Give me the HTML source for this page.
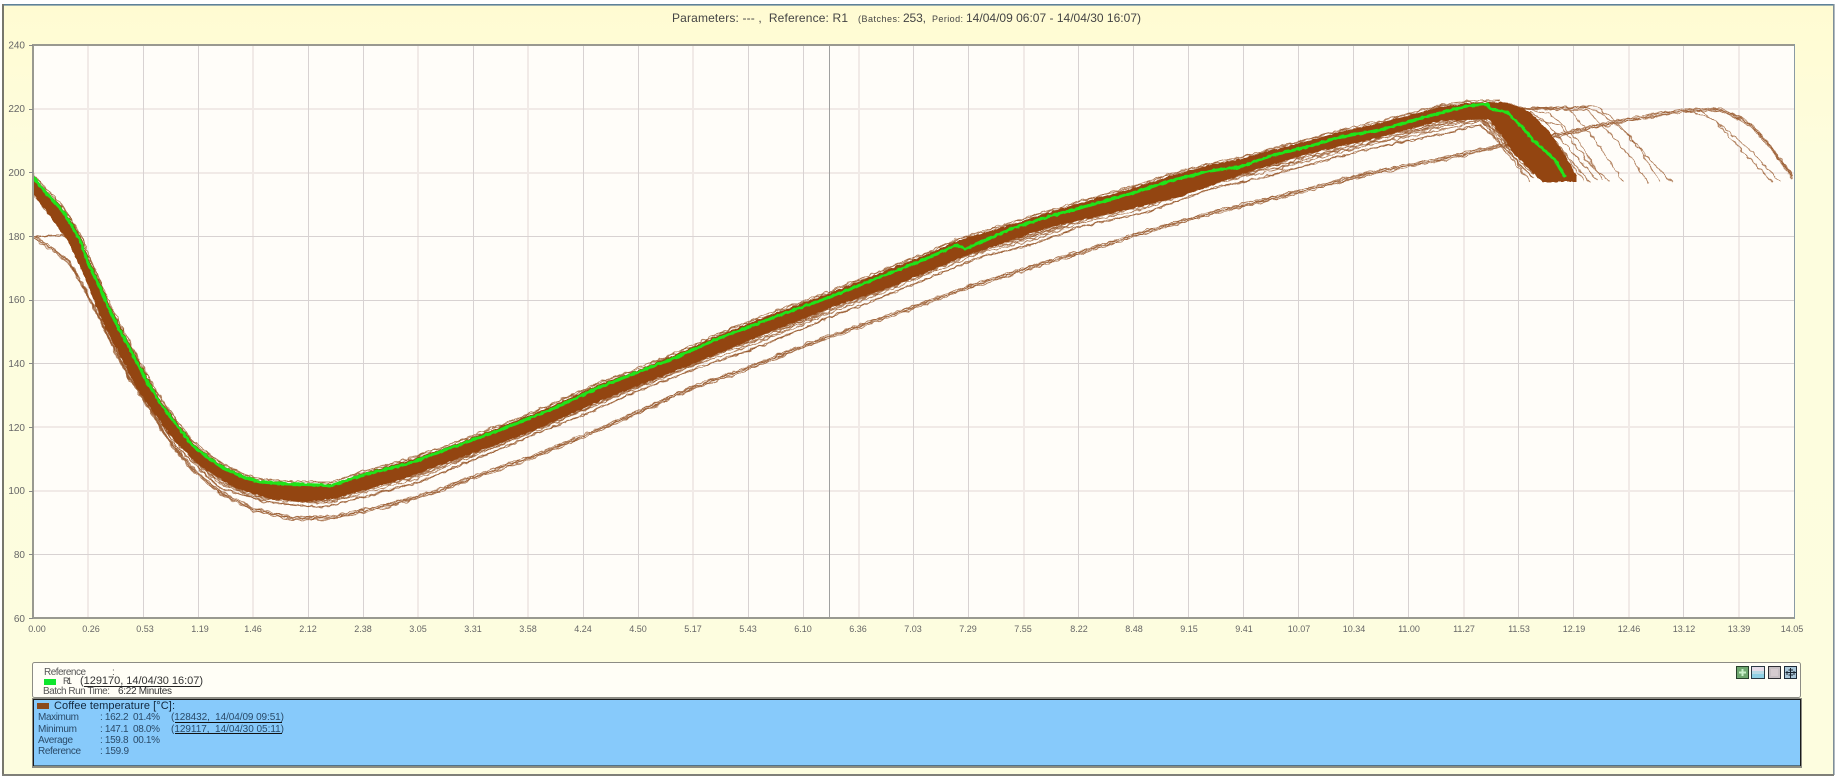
<!DOCTYPE html>
<html><head><meta charset="utf-8"><title>Parameters</title>
<style>
html,body{margin:0;padding:0;background:#fff;width:1838px;height:778px;overflow:hidden}
svg{display:block}
text{font-family:"Liberation Sans",sans-serif;white-space:pre}
.y{font-size:10px;fill:#666;text-anchor:end}
.x{font-size:9px;fill:#666;text-anchor:middle}
.g{font-size:10px;fill:#555}
.d{font-size:10px;fill:#333}
.b{font-size:10px;fill:#2a4a68}
.thin{fill:none;stroke:#8f4a1a;stroke-width:1;stroke-linejoin:round;opacity:.7}
</style></head><body>
<svg width="1838" height="778" viewBox="0 0 1838 778" xmlns="http://www.w3.org/2000/svg">
<defs>
<linearGradient id="bg" x1="0" y1="0" x2="0" y2="1"><stop offset="0" stop-color="#fffbd2"/><stop offset=".07" stop-color="#fffcd6"/><stop offset=".2" stop-color="#fdfdde"/><stop offset="1" stop-color="#fdfddf"/></linearGradient>
<filter id="j1" filterUnits="userSpaceOnUse" x="0" y="0" width="1838" height="778" color-interpolation-filters="sRGB"><feTurbulence type="fractalNoise" baseFrequency="0.2" numOctaves="1" seed="3"/><feDisplacementMap in="SourceGraphic" scale="5" xChannelSelector="R" yChannelSelector="G"/><feGaussianBlur stdDeviation="0.3"/></filter>
<filter id="j2" filterUnits="userSpaceOnUse" x="0" y="0" width="1838" height="778" color-interpolation-filters="sRGB"><feTurbulence type="fractalNoise" baseFrequency="0.16" numOctaves="1" seed="11"/><feDisplacementMap in="SourceGraphic" scale="6" xChannelSelector="R" yChannelSelector="G"/><feGaussianBlur stdDeviation="0.3"/></filter>
<filter id="j3" filterUnits="userSpaceOnUse" x="0" y="0" width="1838" height="778" color-interpolation-filters="sRGB"><feTurbulence type="fractalNoise" baseFrequency="0.25" numOctaves="1" seed="23"/><feDisplacementMap in="SourceGraphic" scale="3" xChannelSelector="R" yChannelSelector="G"/><feGaussianBlur stdDeviation="0.3"/></filter>
<clipPath id="pc"><rect x="33" y="45" width="1761" height="573"/></clipPath>
<path id="m" d="M33,237 48,236 62,235 68,238 78,255 87,280 103,320 120,357 137,388 153,412 177,447 203,472 220,488 270,503 320,507 333,505 417,483 473,460 533,435 583,415 633,393 700,367 750,350 800,330 830,317 880,298 980,257 1030,245 1080,227 1147,212 1213,188 1280,173 1307,165 1373,148 1423,138 1480,125 1497,140 1513,157 1533,178"/>
<path id="m2" d="M87,280 103,320 120,357 137,388 153,412 177,447 203,472 220,488 270,503 320,507 333,505 417,483 473,460 533,435 583,415 633,393 700,367 750,350 800,330 830,317 880,298 980,257 1030,245 1080,227 1147,212 1213,188 1280,173 1307,165 1373,148 1423,138 1480,125 1497,140 1513,157 1533,178"/>
<path id="l" d="M33,237 53,250 70,263 83,287 97,313 113,347 130,380 150,410 170,443 193,470 220,493 253,510 293,519 333,518 383,507 433,493 473,478 533,457 583,437 633,415 693,388 750,368 800,348 830,337 913,308 970,287 1030,268 1080,253 1147,232 1213,213 1280,197 1307,190 1373,173 1440,160 1507,145 1560,135 1613,123 1683,111 1720,110 1747,122 1767,143 1793,178"/>
<path id="t" d="M33,176 45,190 62,207 72,222 82,239 90,262 100,282 110,306 120,326 130,344 139,362 150,382 162,402 177,422 194,444 209,456 225,467 245,476 262,481 287,483 320,484 332,484 363,473 407,461 453,445 500,427 550,407 600,384 633,372 677,354 717,336 767,316 830,293 880,273 923,256 957,241 1013,224 1047,213 1080,203 1133,188 1173,175 1210,165 1240,159 1273,150 1307,141 1340,132 1380,123 1407,116 1440,107 1467,103 1500,102"/>
</defs>

<!-- frame -->
<rect x="3" y="5" width="1831" height="770" fill="url(#bg)"/>
<rect x="2" y="4" width="1832" height="1.6" fill="#5d8199"/>
<rect x="2" y="4" width="2" height="771" fill="#77776c"/>
<rect x="1833" y="4" width="1.6" height="771" fill="#7e8e98"/>
<rect x="2" y="774" width="1832" height="2" fill="#7f7f78"/>

<!-- title -->
<text x="672" y="22" font-size="12" fill="#444" textLength="176" lengthAdjust="spacing">Parameters: --- ,  Reference: R1</text>
<text x="858" y="22" font-size="9" fill="#444" textLength="42" lengthAdjust="spacing">(Batches:</text>
<text x="903" y="22" font-size="12" fill="#444" textLength="23" lengthAdjust="spacing">253,</text>
<text x="932" y="22" font-size="9" fill="#444" textLength="31" lengthAdjust="spacing">Period:</text>
<text x="966" y="22" font-size="12" fill="#444" textLength="175" lengthAdjust="spacing">14/04/09 06:07 - 14/04/30 16:07)</text>

<!-- plot bg -->
<rect x="33" y="45" width="1761" height="573" fill="#fffdf9"/>

<!-- grid: light -->
<path fill="none" stroke="#f1eae7" stroke-width="2" d="M88,45V618M253,45V618M418,45V618M528,45V618M693,45V618M859,45V618M1024,45V618M1464,45V618M1629,45V618M1739,45V618M33,109H1794M33,173H1794M33,427H1794M33,491H1794"/>
<!-- grid: dark -->
<path fill="none" stroke="#d8d2d2" stroke-width="1" d="M143.5,45V618M198.5,45V618M308.5,45V618M363.5,45V618M473.5,45V618M583.5,45V618M638.5,45V618M748.5,45V618M803.5,45V618M913.5,45V618M968.5,45V618M1078.5,45V618M1133.5,45V618M1188.5,45V618M1243.5,45V618M1298.5,45V618M1353.5,45V618M1408.5,45V618M1518.5,45V618M1573.5,45V618M1683.5,45V618M33,236.5H1794M33,300.5H1794M33,363.5H1794M33,554.5H1794"/>
<!-- cursor -->
<rect x="829" y="45" width="1" height="573" fill="#a0a0a0"/>

<!-- curves -->
<g clip-path="url(#pc)">
<g filter="url(#j1)" class="thin">
<use href="#l"/>
<use href="#l" transform="translate(0,-2)"/>
<use href="#m"/>
<use href="#m2" transform="translate(0,-4)"/>
<use href="#m2" transform="translate(0,-8)"/>
<use href="#t" transform="translate(0,-2)"/>
<use href="#t" transform="translate(0,12)"/>
<use href="#t" transform="translate(0,16)"/>
<path d="M1488,108 1533,108 1590,108 1600,113 1627,133 1650,160 1672,182"/>
<path d="M1500,108 1587,110 1607,130 1633,160 1648,183"/>
<path d="M1510,108 1570,110 1593,137 1620,177 1624,182"/>
<path d="M1520,108 1550,113 1580,143 1603,180"/>
<path d="M1530,112 1543,120 1573,153 1597,180"/>
<path d="M1530,120 1555,140 1583,180"/>
<path d="M1540,125 1566,155 1590,182"/>
<path d="M1683,111 1700,110 1727,130 1753,153 1780,182"/>
<path d="M1690,112 1712,118 1740,148 1772,182"/>
</g>
<g filter="url(#j2)" class="thin">
<use href="#l" transform="translate(0,1)"/>
<use href="#l" transform="translate(0,-1)"/>
<use href="#m"/>
<use href="#m2" transform="translate(0,-6)"/>
<use href="#m2" transform="translate(0,-10)"/>
<use href="#t" transform="translate(0,-1)"/>
<use href="#t" transform="translate(0,14)"/>
<use href="#t" transform="translate(0,18)"/>
<path d="M1500,110 1540,108 1595,106 1615,120 1640,150 1660,182"/>
<path d="M1510,115 1560,125 1590,165 1610,182"/>
<path d="M1470,118 1490,125 1510,150 1525,175"/>
<path d="M1465,112 1485,122 1500,145 1530,182"/>
</g>
<polygon filter="url(#j3)" fill="#934511" points="33,176 45,190 62,207 72,222 82,239 90,262 100,282 110,306 120,326 130,344 139,362 150,382 162,402 177,422 194,444 209,456 225,467 245,476 262,481 287,483 320,484 332,484 363,473 407,461 453,445 500,427 550,407 600,384 633,372 677,354 717,336 767,316 830,293 880,273 923,256 957,241 1013,224 1047,213 1080,203 1133,188 1173,175 1210,165 1240,159 1273,150 1307,141 1340,132 1380,123 1407,116 1440,107 1467,103 1500,102 1510,103 1530,112 1548,130 1562,150 1577,176 1577,182 1543,182 1533,173 1513,153 1503,137 1488,119 1440,121 1373,139 1307,154 1240,175 1213,185 1180,197 1113,213 1047,228 963,257 897,285 830,308 780,328 767,333 693,364 600,401 533,431 460,458 400,480 333,499 300,502 270,499 237,489 201,467 175,442 151,409 135,385 118,352 101,319 85,278 68,241 52,219 33,194"/>
<polyline filter="url(#j3)" fill="none" stroke="#20e41a" stroke-width="3" stroke-linejoin="round" points="33,177 45,192 62,210 70,223 80,240 88,263 98,283 108,307 118,327 128,345 137,363 148,383 160,403 175,423 192,445 207,457 223,468 243,477 260,482 287,484 320,485 330,486 363,475 407,464 453,447 500,430 550,410 600,387 633,374 677,357 717,339 767,320 780,315 830,297 880,277 923,260 957,245 965,249 1013,228 1047,217 1080,208 1133,193 1173,180 1210,171 1240,167 1273,155 1307,147 1340,137 1380,130 1407,122 1440,113 1467,106 1487,104 1490,109 1507,112 1523,128 1533,140 1555,160 1565,177"/>
</g>

<!-- plot border -->
<rect x="32" y="44" width="1762" height="2" fill="#999990"/>
<rect x="32" y="44" width="2" height="575" fill="#999990"/>
<rect x="32" y="617" width="1762" height="2" fill="#999990"/>
<rect x="1794" y="44" width="1" height="575" fill="#8a9aa4"/>

<!-- y ticks and labels -->
<path stroke="#888" stroke-width="1" fill="none" d="M29,45.5H33M29,109.5H33M29,172.5H33M29,236.5H33M29,300.5H33M29,363.5H33M29,427.5H33M29,491.5H33M29,554.5H33M29,618.5H33"/>
<text class="y" x="25" y="48.500">240</text>
<text class="y" x="25" y="112">220</text>
<text class="y" x="25" y="176">200</text>
<text class="y" x="25" y="240">180</text>
<text class="y" x="25" y="303">160</text>
<text class="y" x="25" y="367">140</text>
<text class="y" x="25" y="431">120</text>
<text class="y" x="25" y="494">100</text>
<text class="y" x="25" y="558">80</text>
<text class="y" x="25" y="622">60</text>

<!-- x labels -->
<text class="x" x="37" y="632">0.00</text>
<text class="x" x="91" y="632">0.26</text>
<text class="x" x="145" y="632">0.53</text>
<text class="x" x="200" y="632">1.19</text>
<text class="x" x="253" y="632">1.46</text>
<text class="x" x="308" y="632">2.12</text>
<text class="x" x="363" y="632">2.38</text>
<text class="x" x="418" y="632">3.05</text>
<text class="x" x="473" y="632">3.31</text>
<text class="x" x="528" y="632">3.58</text>
<text class="x" x="583" y="632">4.24</text>
<text class="x" x="638" y="632">4.50</text>
<text class="x" x="693" y="632">5.17</text>
<text class="x" x="748" y="632">5.43</text>
<text class="x" x="803" y="632">6.10</text>
<text class="x" x="858" y="632">6.36</text>
<text class="x" x="913" y="632">7.03</text>
<text class="x" x="968" y="632">7.29</text>
<text class="x" x="1023" y="632">7.55</text>
<text class="x" x="1079" y="632">8.22</text>
<text class="x" x="1134" y="632">8.48</text>
<text class="x" x="1189" y="632">9.15</text>
<text class="x" x="1244" y="632">9.41</text>
<text class="x" x="1299" y="632">10.07</text>
<text class="x" x="1354" y="632">10.34</text>
<text class="x" x="1409" y="632">11.00</text>
<text class="x" x="1464" y="632">11.27</text>
<text class="x" x="1519" y="632">11.53</text>
<text class="x" x="1574" y="632">12.19</text>
<text class="x" x="1629" y="632">12.46</text>
<text class="x" x="1684" y="632">13.12</text>
<text class="x" x="1739" y="632">13.39</text>
<text class="x" x="1792" y="632">14.05</text>

<!-- legend top panel -->
<rect x="32.500" y="662.500" width="1768" height="35" rx="2" fill="#fffef6" stroke="#8c8c84"/>
<text class="g" x="44" y="675" textLength="42" lengthAdjust="spacing">Reference</text>
<text class="g" x="112" y="675">:</text>
<rect x="44" y="679" width="12" height="6" fill="#0ee62c"/>
<text x="63" y="684" font-size="9" fill="#444" textLength="9" lengthAdjust="spacing">R1</text>
<text x="80" y="684" font-size="11" fill="#333" textLength="123" lengthAdjust="spacing">(129170, 14/04/30 16:07)</text>
<rect x="84" y="686" width="116" height="1" fill="#222"/>
<text class="g" x="43" y="694" textLength="67" lengthAdjust="spacing">Batch Run Time:</text>
<text class="d" x="118" y="694" textLength="54" lengthAdjust="spacing">6:22 Minutes</text>

<!-- icons -->
<rect x="1736.500" y="666.500" width="12" height="12" fill="#6fa86f" stroke="#26402a"/>
<path d="M1742.500,669V676M1739,672.500H1746" stroke="#c9f0c9" stroke-width="2" fill="none"/>
<rect x="1751.500" y="666.500" width="13" height="12" fill="#b9dbe6" stroke="#2a3a44"/>
<rect x="1752" y="667" width="12" height="4" fill="#e6dde8"/>
<rect x="1752" y="674" width="12" height="4" fill="#8fd0e4"/>
<rect x="1768.500" y="666.500" width="12" height="12" fill="#c8c0c4" stroke="#2e2e34"/>
<rect x="1771" y="669" width="7" height="7" fill="#d6ccd0"/>
<rect x="1784.500" y="666.500" width="12" height="12" fill="#a9c6d8" stroke="#1e2a38"/>
<path d="M1790.500,668V678M1785.500,672.500H1796M1788.500,670H1793M1788.500,675H1793M1787,671V675M1794,671V675" stroke="#1a2430" stroke-width="1" fill="none"/>

<!-- blue panel -->
<rect x="32.500" y="698.500" width="1769" height="69" fill="none" stroke="#8c8c84"/>
<rect x="33.500" y="699.500" width="1767" height="66.500" fill="#87cafb" stroke="#1a1a1a"/>
<rect x="37" y="703" width="12" height="6" fill="#8b4a1c"/>
<text x="54" y="709" font-size="11" fill="#12263c" textLength="121" lengthAdjust="spacing">Coffee temperature [°C]:</text>
<text class="b" x="38" y="720" textLength="41" lengthAdjust="spacing">Maximum</text>
<text class="b" x="100" y="720" textLength="60" lengthAdjust="spacing">: 162.2  01.4%</text>
<text class="b" x="171" y="720" textLength="113" lengthAdjust="spacing">(128432,  14/04/09 09:51)</text>
<rect x="175" y="722" width="107" height="1" fill="#111"/>
<text class="b" x="38" y="732" textLength="39" lengthAdjust="spacing">Minimum</text>
<text class="b" x="100" y="732" textLength="60" lengthAdjust="spacing">: 147.1  08.0%</text>
<text class="b" x="171" y="732" textLength="113" lengthAdjust="spacing">(129117,  14/04/30 05:11)</text>
<rect x="175" y="733" width="107" height="1" fill="#111"/>
<text class="b" x="38" y="743" textLength="35" lengthAdjust="spacing">Average</text>
<text class="b" x="100" y="743" textLength="60" lengthAdjust="spacing">: 159.8  00.1%</text>
<text class="b" x="38" y="754" textLength="43" lengthAdjust="spacing">Reference</text>
<text class="b" x="100" y="754" textLength="29" lengthAdjust="spacing">: 159.9</text>
</svg>
</body></html>
